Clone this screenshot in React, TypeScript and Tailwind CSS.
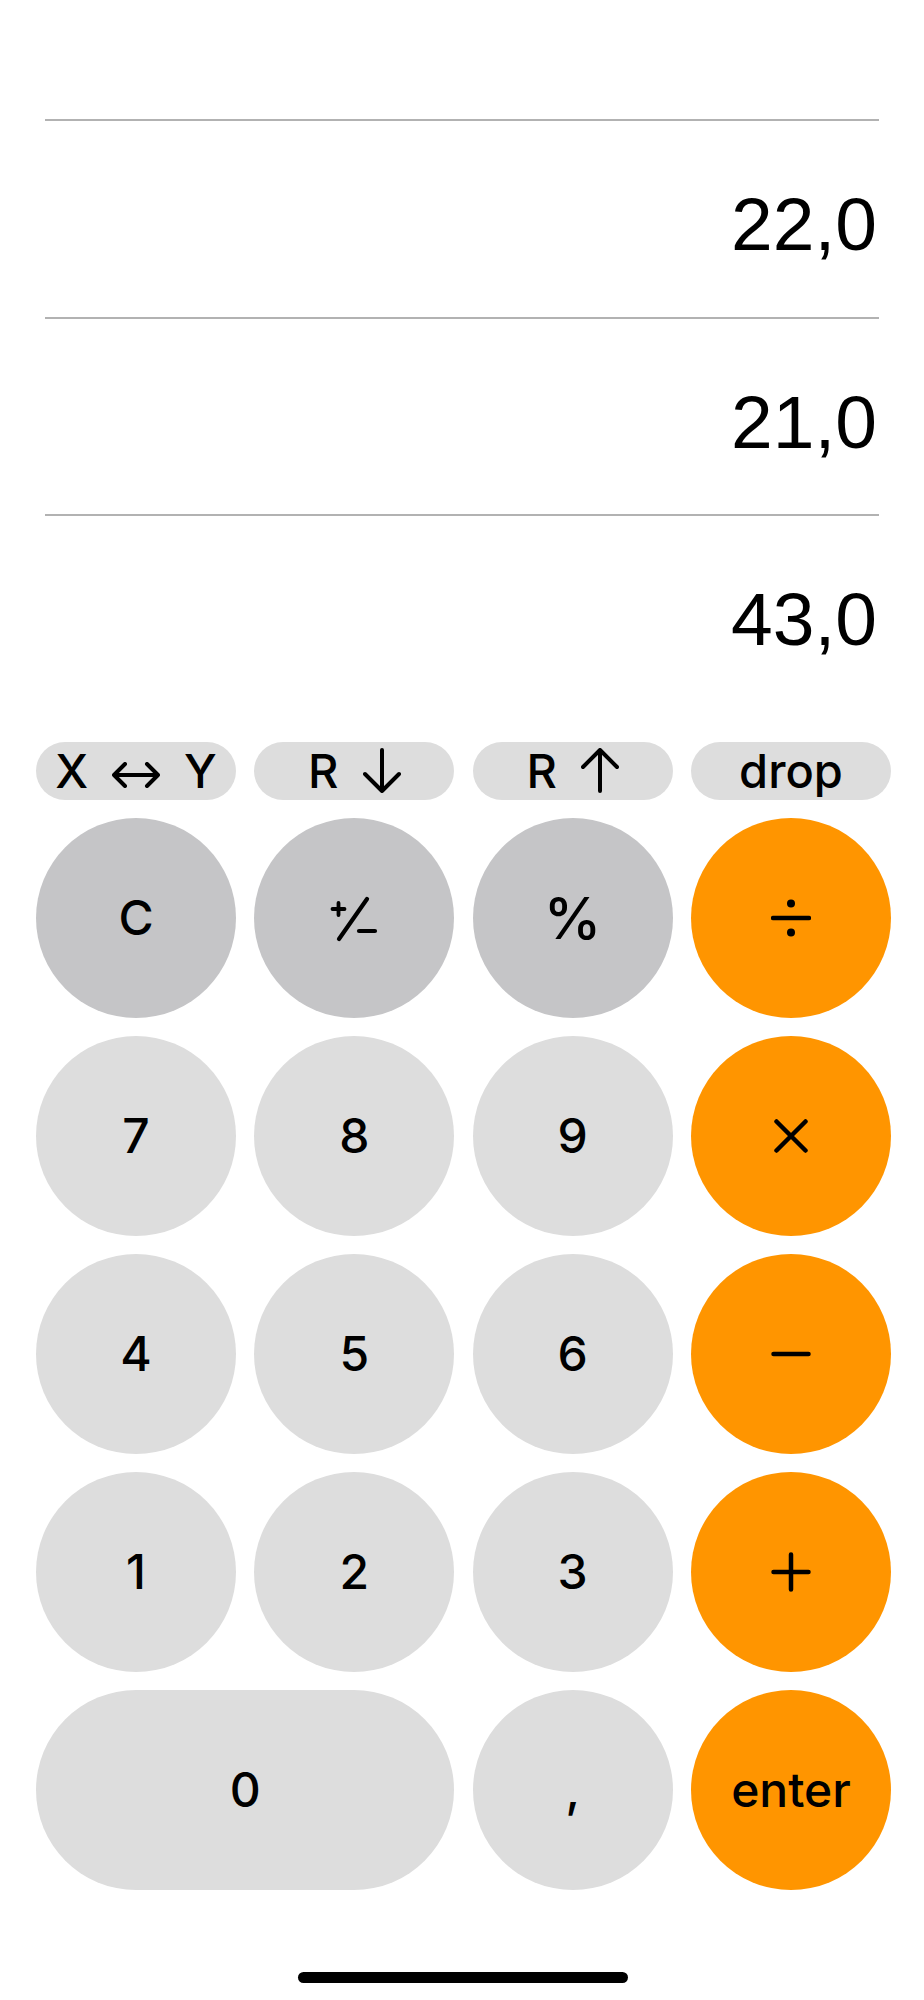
import React from "react";

const KEY_FONT = { fontFamily: "Inter, 'Liberation Sans', sans-serif" };

function Pill({ children }: { children: React.ReactNode }) {
  return (
    <div
      className="h-[58px] rounded-full bg-[#dddddd] flex items-center justify-center gap-[24px] text-[47px] leading-none font-medium text-black"
      style={KEY_FONT}
    >
      {children}
    </div>
  );
}

function Key({
  children,
  variant = "light",
  wide = false,
}: {
  children: React.ReactNode;
  variant?: "light" | "dark" | "orange";
  wide?: boolean;
}) {
  const bg =
    variant === "light" ? "bg-[#dddddd]" : variant === "dark" ? "bg-[#c5c5c7]" : "bg-[#ff9500]";
  return (
    <div
      className={`${bg} ${wide ? "col-span-2 h-[200px]" : "aspect-square"} rounded-full flex items-center justify-center text-[48px] leading-none font-[450] text-black`}
      style={KEY_FONT}
    >
      {children}
    </div>
  );
}

const stroke = { stroke: "black", strokeLinecap: "round" as const, strokeLinejoin: "round" as const, fill: "none" };

export default function App() {
  const rows = ["22,0", "21,0", "43,0"];
  return (
    <div className="w-[924px] h-[2000px] bg-white overflow-hidden flex flex-col">
      <div className="h-[119px] shrink-0" />
      <div className="px-[45px]">
        {rows.map((r) => (
          <div
            key={r}
            className="h-[197.5px] border-t-2 border-[#b2b2b2] flex items-center justify-end pt-[12px] pr-[2px] text-[75px] leading-none text-black"
            style={{ fontFamily: "'Liberation Sans', Arial, sans-serif" }}
          >
            {r}
          </div>
        ))}
      </div>

      <div className="pt-[30px] pl-[36px] pr-[33px] grid grid-cols-4 gap-x-[18.33px] gap-y-[18px]">
        <Pill>
          <span>X</span>
          <svg width="48" height="26" viewBox="0 0 48 26" className="mt-[8px]">
            <path d="M2 13 H46 M13 2 L2 13 L13 24 M35 2 L46 13 L35 24" {...stroke} strokeWidth="4" />
          </svg>
          <span>Y</span>
        </Pill>
        <Pill>
          <span>R</span>
          <svg width="38" height="45" viewBox="0 0 38 45">
            <path d="M19 2 V43 M2 26 L19 43 L36 26" {...stroke} strokeWidth="4" />
          </svg>
        </Pill>
        <Pill>
          <span>R</span>
          <svg width="38" height="45" viewBox="0 0 38 45">
            <path d="M19 43 V2 M2 19 L19 2 L36 19" {...stroke} strokeWidth="4" />
          </svg>
        </Pill>
        <Pill>
          <span>drop</span>
        </Pill>

        <Key variant="dark">C</Key>
        <Key variant="dark">
          <svg width="48" height="46" viewBox="0 0 48 46" className="mt-[2px]">
            <path d="M8.5 7 V19 M2.5 13 H14.5" {...stroke} strokeWidth="3.8" />
            <path d="M9 43 L37 3" {...stroke} strokeWidth="4.2" />
            <path d="M29 35 H45" {...stroke} strokeWidth="4.2" />
          </svg>
        </Key>
        <Key variant="dark">
          <span className="text-[58px]">%</span>
        </Key>
        <Key variant="orange">
          <svg width="40" height="38" viewBox="0 0 40 38">
            <path d="M2 19 H38" {...stroke} strokeWidth="4.5" />
            <circle cx="20" cy="4.5" r="4" fill="black" />
            <circle cx="20" cy="33.5" r="4" fill="black" />
          </svg>
        </Key>

        <Key>7</Key>
        <Key>8</Key>
        <Key>9</Key>
        <Key variant="orange">
          <svg width="34" height="34" viewBox="0 0 34 34">
            <path d="M2.5 2.5 L31.5 31.5 M31.5 2.5 L2.5 31.5" {...stroke} strokeWidth="4.5" />
          </svg>
        </Key>

        <Key>4</Key>
        <Key>5</Key>
        <Key>6</Key>
        <Key variant="orange">
          <svg width="40" height="6" viewBox="0 0 40 6">
            <path d="M2.5 3 H37.5" {...stroke} strokeWidth="4.5" />
          </svg>
        </Key>

        <Key>1</Key>
        <Key>2</Key>
        <Key>3</Key>
        <Key variant="orange">
          <svg width="40" height="40" viewBox="0 0 40 40">
            <path d="M2.5 20 H37.5 M20 2.5 V37.5" {...stroke} strokeWidth="4.5" />
          </svg>
        </Key>

        <Key wide>0</Key>
        <Key>,</Key>
        <Key variant="orange">
          <span>enter</span>
        </Key>
      </div>

      <div className="mt-[82px] mx-auto w-[330px] h-[11px] rounded-full bg-black translate-x-[1px]" />
    </div>
  );
}
